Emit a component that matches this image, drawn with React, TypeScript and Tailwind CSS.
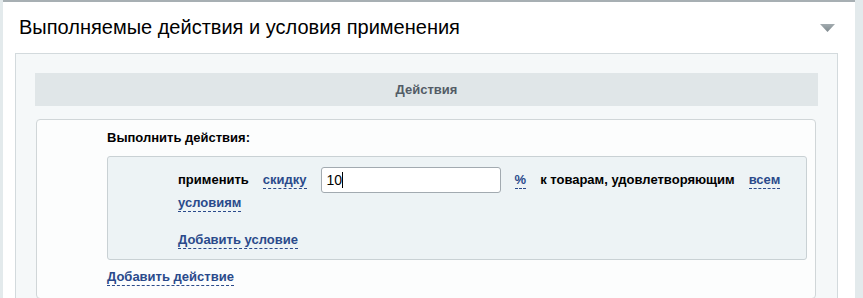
import React from "react";

const Link = ({ children }: { children: React.ReactNode }) => (
  <a
    href="#"
    className="inline-block font-bold text-[#2a4a8b] leading-[16px] border-b border-dashed border-[#2a4a8b] no-underline"
  >
    {children}
  </a>
);

const App = () => {
  return (
    <div
      className="w-[863px] h-[298px] overflow-hidden bg-[#e3eaec] pl-[3px] pr-[8px]"
      style={{ fontFamily: '"Liberation Sans", Arial, sans-serif' }}
    >
      <div className="h-full bg-white border-t-2 border-[#a7afb3]">
        <div className="flex items-start justify-between pl-[16px] pr-[20px] pt-[13px] h-[51px]">
          <h2 className="text-[20px] leading-[24px] text-black font-normal">
            Выполняемые действия и условия применения
          </h2>
          <svg width="15" height="8" viewBox="0 0 15 8" className="mt-[9px]">
            <defs>
              <linearGradient id="tri" x1="0" y1="0" x2="0" y2="1">
                <stop offset="0" stopColor="#a3acb0" />
                <stop offset="1" stopColor="#7f898e" />
              </linearGradient>
            </defs>
            <polygon points="0,0 15,0 7.5,8" fill="url(#tri)" />
          </svg>
        </div>

        <div className="ml-[12px] mr-[17px] h-[300px] bg-[#f5f8f9] border border-[#d3dadd] px-[19px] pt-[19px]">
          <div className="h-[33px] bg-[#e0e6e8] flex items-center justify-center text-[13px] font-bold text-[#535c66]">
            Действия
          </div>

          <div className="mt-[13px] ml-[1px] mr-[2px] bg-[#fcfdfd] border border-[#d0d6d8] rounded-[4px] pl-[70px] pr-[8px] pt-[10px] pb-[12px] text-[13px]">
            <div className="font-bold text-black leading-[16px]">Выполнить действия:</div>

            <div className="mt-[10px] bg-[#edf3f5] border border-[#c9d1d4] rounded-[3px] pl-[70px] pr-[20px] pt-[10px] pb-[9px]">
              <div className="flex flex-wrap items-center gap-x-[14px] gap-y-[2px]">
                <span className="font-bold text-black leading-[16px]">применить</span>
                <Link>скидку</Link>
                <div className="w-[180px] h-[26px] border border-[#a2aab0] rounded-[3px] bg-white pl-[5px] flex items-center text-[14px] text-black">
                  <span>10</span>
                  <span className="w-px h-[16px] bg-black" />
                </div>
                <Link>%</Link>
                <span className="font-bold text-black leading-[16px]">к товарам, удовлетворяющим</span>
                <Link>всем</Link>
                <Link>условиям</Link>
              </div>
              <div className="mt-[18px]">
                <Link>Добавить условие</Link>
              </div>
            </div>

            <div className="mt-[7px]">
              <Link>Добавить действие</Link>
            </div>
          </div>
        </div>
      </div>
    </div>
  );
};

export default App;
